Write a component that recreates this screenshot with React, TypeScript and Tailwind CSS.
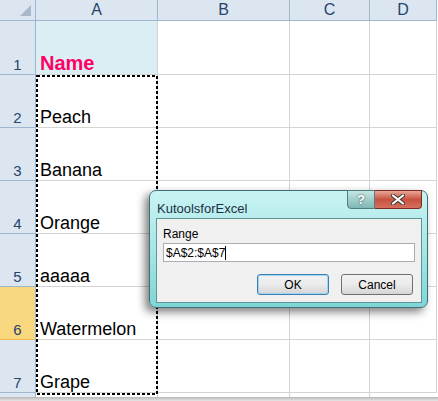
import React from "react";

const cols = [
  { label: "A", w: 122 },
  { label: "B", w: 132 },
  { label: "C", w: 80 },
  { label: "D", w: 67 },
];

const rows = [
  { n: 1, h: 54, text: "Name" },
  { n: 2, h: 53, text: "Peach" },
  { n: 3, h: 53, text: "Banana" },
  { n: 4, h: 53, text: "Orange" },
  { n: 5, h: 53, text: "aaaaa" },
  { n: 6, h: 53, text: "Watermelon" },
  { n: 7, h: 53, text: "Grape" },
];

function Dialog() {
  return (
    <div className="absolute left-[149px] top-[190px] w-[279px] h-[118px] rounded-[7px] border border-[#3f6f72] bg-gradient-to-b from-[#c9f3f3] via-[#a6e6e6] to-[#7fd6d6] shadow-[-4px_4px_8px_rgba(0,0,0,0.5)]">
      <div className="absolute left-[7px] top-[8px] text-[13px] text-[#1b2f44]">KutoolsforExcel</div>
      <div className="absolute right-[5px] top-[-1px] flex">
        <div className="w-[28px] h-[19px] rounded-bl-[4px] border border-[#4d7f80] bg-gradient-to-b from-[#c4e6e4] to-[#7fb7b5] flex items-center justify-center text-white text-[13px] font-bold leading-none [text-shadow:0_0_2px_#333]">
          ?
        </div>
        <div className="w-[47px] h-[19px] rounded-br-[4px] border border-l-0 border-[#7a2a22] bg-gradient-to-b from-[#e7a796] via-[#c8513f] to-[#d6705c] flex items-center justify-center">
          <svg width="14" height="11" viewBox="0 0 14 11">
            <path d="M2 1.5 L12 9.5 M12 1.5 L2 9.5" stroke="#3a3a3a" strokeWidth="4" strokeLinecap="round" />
            <path d="M2 1.5 L12 9.5 M12 1.5 L2 9.5" stroke="#ffffff" strokeWidth="2.2" strokeLinecap="round" />
          </svg>
        </div>
      </div>
      <div className="absolute left-[6px] top-[27px] right-[5px] bottom-[4px] border border-[#5d9595] bg-[#f0f0f0] px-[6px] pt-[8px]">
        <div className="text-[12px] leading-[15px] text-black">Range</div>
        <div className="mt-[1px] h-[19px] border border-[#abadb3] bg-white flex items-center pl-[2px] text-[12px] text-black">
          $A$2:$A$7<span className="inline-block w-px h-[14px] bg-black" />
        </div>
        <div className="mt-[12px] flex justify-end gap-[12px] pr-[2px]">
          <div className="w-[72px] h-[21px] rounded-[3px] border border-[#3c7fb1] bg-gradient-to-b from-[#f2f2f2] via-[#ebebeb] to-[#d5d5d5] shadow-[inset_0_0_0_1px_#9fd6f5] flex items-center justify-center text-[12px] text-black">
            OK
          </div>
          <div className="w-[72px] h-[21px] rounded-[3px] border border-[#707070] bg-gradient-to-b from-[#f2f2f2] via-[#ebebeb] to-[#d5d5d5] flex items-center justify-center text-[12px] text-black">
            Cancel
          </div>
        </div>
      </div>
    </div>
  );
}

export default function App() {
  return (
    <div className="relative w-[438px] h-[401px] overflow-hidden bg-white font-['Liberation_Sans',Arial,sans-serif]">
      {/* header row */}
      <div className="flex h-[21px]">
        <div className="w-[36px] shrink-0 border-r border-b border-[#9eb6ce] bg-[#dce6f1] relative">
          <svg className="absolute right-[4px] bottom-[4px]" width="11" height="11" viewBox="0 0 11 11">
            <path d="M11 0 L11 11 L0 11 Z" fill="#a9b8cb" />
          </svg>
        </div>
        {cols.map((c) => (
          <div
            key={c.label}
            style={{ width: c.w }}
            className="shrink-0 border-r border-b border-[#9eb6ce] bg-[#dce6f1] flex items-center justify-center text-[16px] text-[#27436b]"
          >
            {c.label}
          </div>
        ))}
      </div>

      {rows.map((r) => (
        <div key={r.n} className="flex" style={{ height: r.h }}>
          <div
            className={
              "w-[36px] shrink-0 border-r border-b border-[#9eb6ce] flex items-end justify-center pb-[2px] text-[15px] leading-[15px] text-[#27436b] " +
              (r.n === 6 ? "bg-[#f9d77e] border-b-[#f2b54b]" : "bg-[#dce6f1]")
            }
          >
            {r.n}
          </div>
          <div
            className={
              "w-[122px] shrink-0 border-r border-b border-[#d4d4d4] flex items-end pl-[4px] " +
              (r.n === 1
                ? "bg-[#daeef3] font-bold text-[#ff0066] text-[20px] leading-[20px] pb-[1px]"
                : "text-black text-[18px] leading-[18px] pb-[1px]")
            }
          >
            {r.text}
          </div>
          <div className="w-[132px] shrink-0 border-r border-b border-[#d4d4d4]" />
          <div className="w-[80px] shrink-0 border-r border-b border-[#d4d4d4]" />
          <div className="w-[67px] shrink-0 border-r border-b border-[#d4d4d4]" />
        </div>
      ))}

      <div className="flex h-[4px]">
        <div className="w-[36px] shrink-0 border-r border-[#9eb6ce] bg-[#dce6f1]" />
        <div className="w-[122px] shrink-0 border-r border-[#d4d4d4]" />
        <div className="w-[132px] shrink-0 border-r border-[#d4d4d4]" />
        <div className="w-[80px] shrink-0 border-r border-[#d4d4d4]" />
      </div>
      <div className="h-[4px] bg-gradient-to-b from-[#b8b8b8] to-[#e6e6e6]" />

      {/* copy marquee around A2:A7 */}
      <svg className="absolute left-[36px] top-[75px]" width="122" height="320" viewBox="0 0 122 320">
        <rect x="1" y="1" width="120" height="318" fill="none" stroke="#000" strokeWidth="2" strokeDasharray="3 2" />
      </svg>

      <Dialog />
    </div>
  );
}
